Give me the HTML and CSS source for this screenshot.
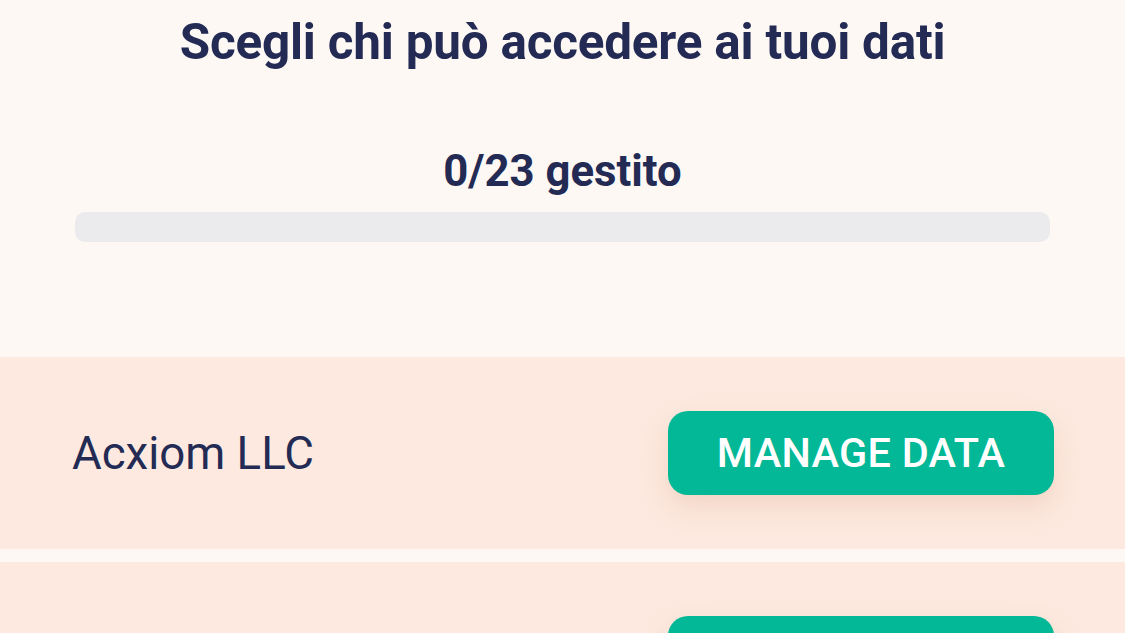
FILE: index.html
```html
<!DOCTYPE html>
<html lang="it">
<head>
<meta charset="utf-8">
<link rel="stylesheet" href="styles.css">
</head>
<body>
<div class="page">
  <header class="top">
    <h1 class="title">Scegli chi può accedere ai tuoi dati</h1>
    <div class="count">0/23 gestito</div>
    <div class="bar"><div class="fill" style="width:0%"></div></div>
  </header>
  <ul class="list">
    <li class="row">
      <span class="name">Acxiom LLC</span>
      <button class="btn">MANAGE DATA</button>
    </li>
    <li class="row">
      <span class="name">Oracle</span>
      <button class="btn">MANAGE DATA</button>
    </li>
  </ul>
</div>
</body>
</html>
```

FILE: styles.css
```css
* { box-sizing: border-box; }
html, body { margin: 0; padding: 0; }
body {
  background: #fdf8f4;
  font-family: Roboto, "Liberation Sans", sans-serif;
  color: #232b55;
  width: 1125px;
  height: 633px;
  overflow: hidden;
}
.page { display: flex; flex-direction: column; }
.top {
  display: flex;
  flex-direction: column;
  align-items: center;
  padding: 13px 75px 0;
  height: 357px;
}
.title {
  margin: 0;
  font-size: 49.4px;
  font-weight: 700;
  line-height: 58px;
  letter-spacing: -0.2px;
}
.count {
  margin-top: 74px;
  font-size: 43.7px;
  font-weight: 700;
  line-height: 52px;
}
.bar {
  margin-top: 15px;
  width: 100%;
  height: 30px;
  border-radius: 10px;
  background: #ebebed;
  overflow: hidden;
}
.fill { height: 100%; background: #03b896; }
.list {
  list-style: none;
  margin: 0;
  padding: 0;
  display: flex;
  flex-direction: column;
  gap: 13px;
}
.row {
  height: 192px;
  background: #fde9df;
  display: flex;
  align-items: center;
  justify-content: space-between;
  padding: 0 71px 0 72px;
}
.name {
  font-size: 45.6px;
  font-weight: 400;
}
.btn {
  width: 386px;
  height: 84px;
  border: none;
  border-radius: 20px;
  background: #03b896;
  color: #fff;
  font-family: Roboto, "Liberation Sans", sans-serif;
  font-size: 41.4px;
  font-weight: 500;
  letter-spacing: 0.3px;
  box-shadow: 0 12px 24px rgba(220, 170, 140, 0.3);
}
```
